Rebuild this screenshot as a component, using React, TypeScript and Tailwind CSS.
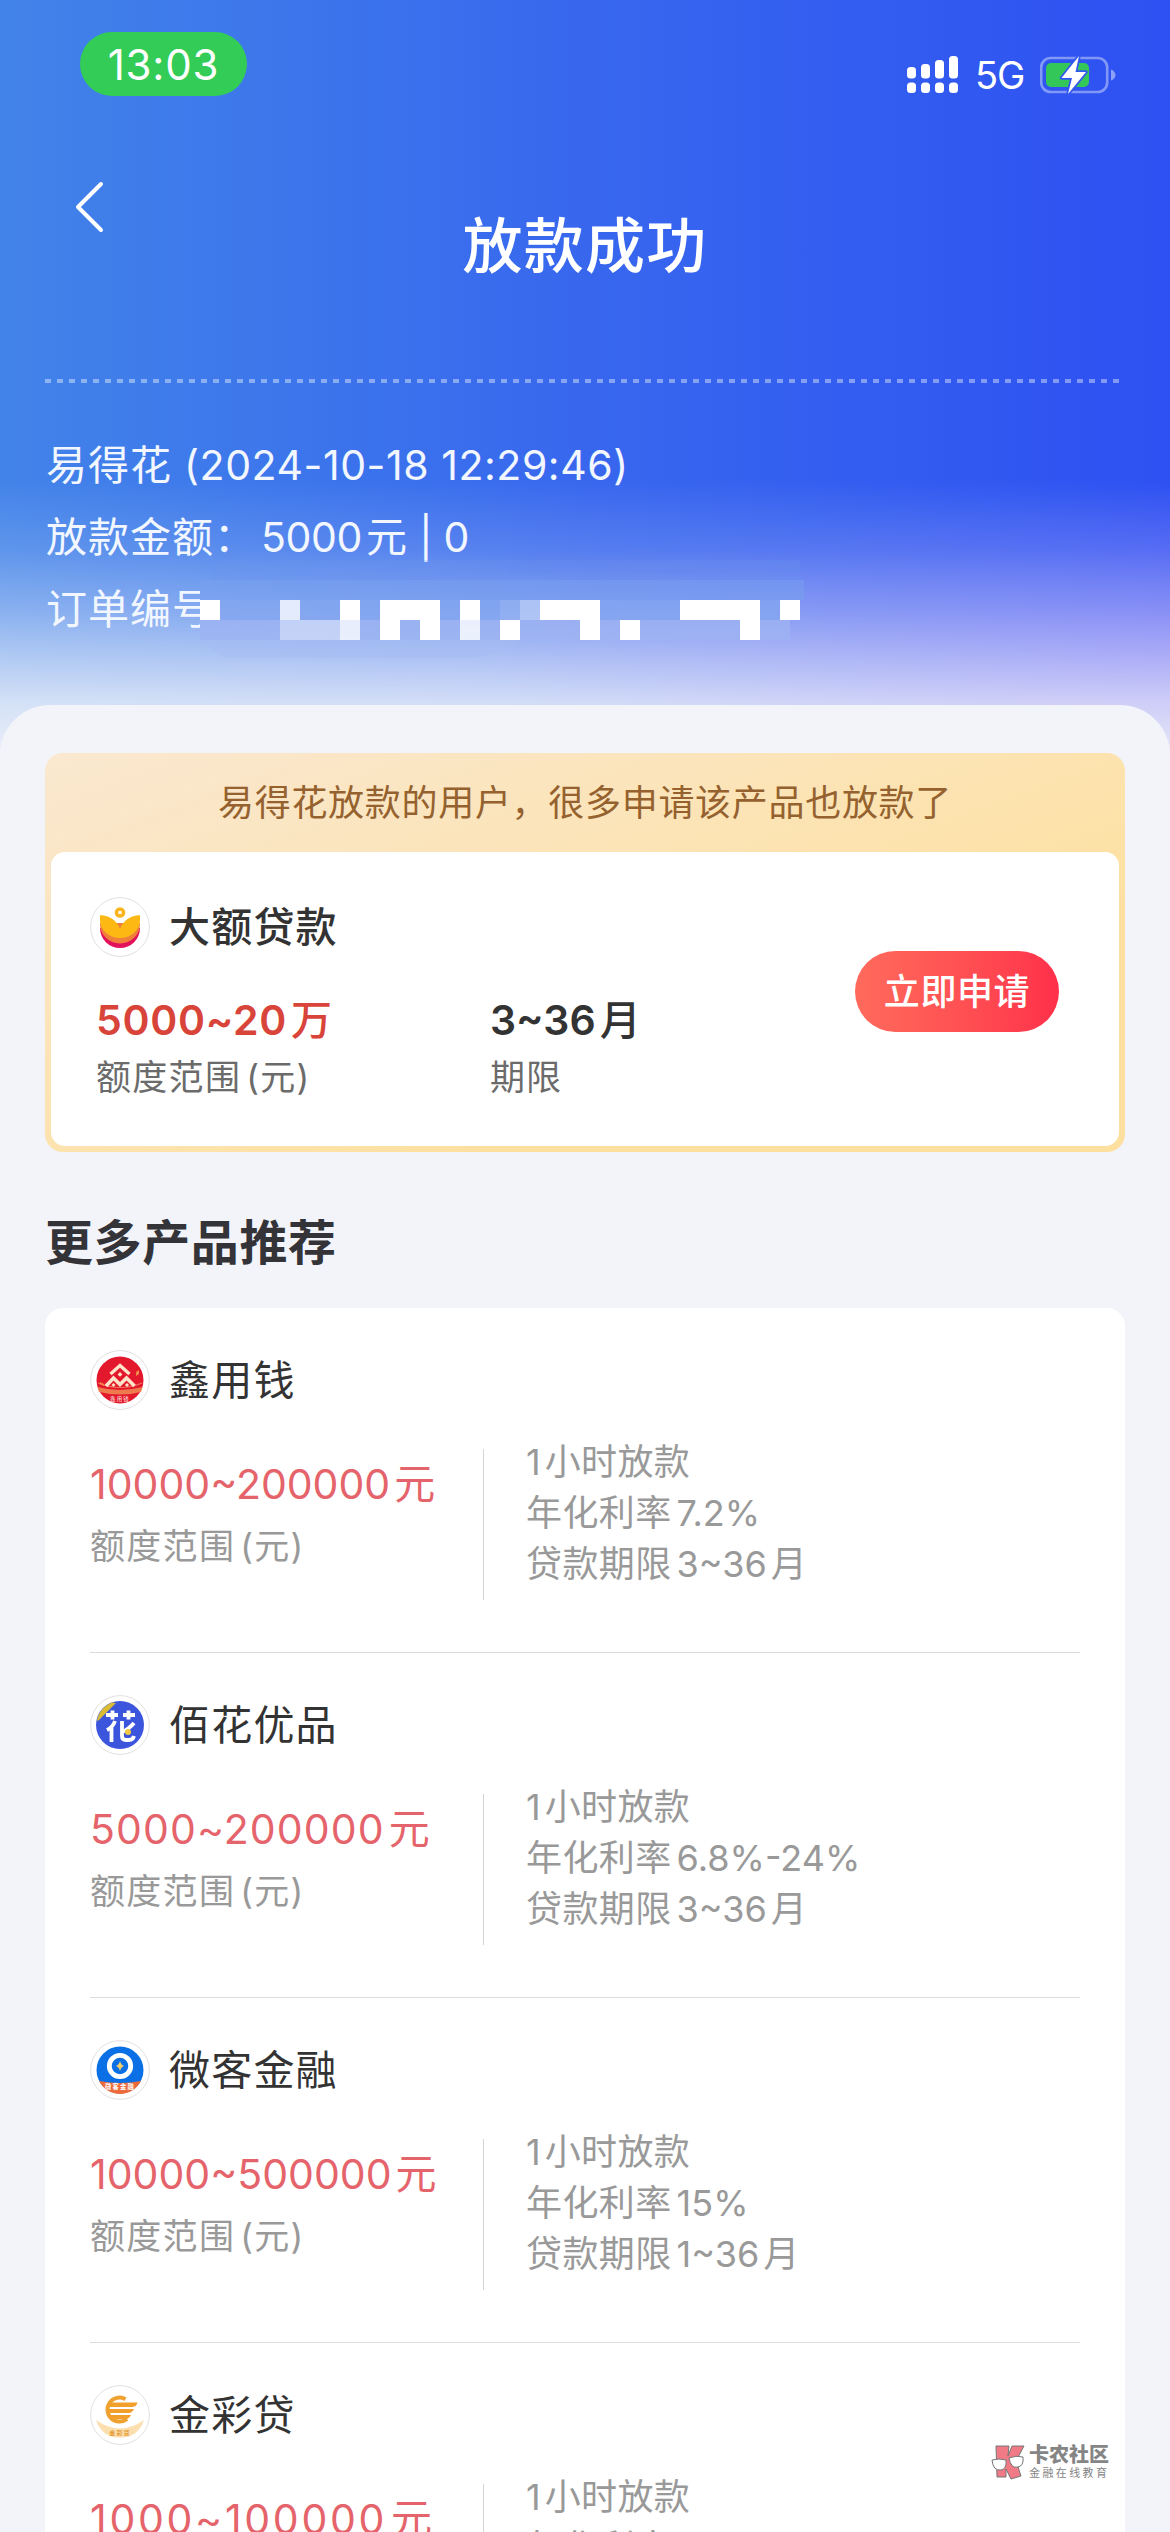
import type { ReactNode } from "react";
import clsx from "clsx";

interface Product {
  name: string;
  amount: string;
  amountTracking: string;
  details: string[];
  logo: ReactNode;
}

// 數字與英文使用 Inter，中文使用 Noto Sans CJK
function Mixed({ text, latin }: { text: string; latin?: string }) {
  const parts = text.match(/[\u2E80-\uFFEF]+|[^\u2E80-\uFFEF]+/g) || [];
  return (
    <>
      {parts.map((part, i) => {
        const isCjk = /[\u2E80-\uFFEF]/.test(part);
        const gapBefore = !isCjk && i > 0 && !/^[) ]/.test(part);
        const gapAfter = !isCjk && i < parts.length - 1 && !/[( ]$/.test(part);
        return (
          <span
            key={i}
            className={clsx("whitespace-pre", !isCjk && latin, gapBefore && "ml-[5px]", gapAfter && "mr-1")}
          >
            {part}
          </span>
        );
      })}
    </>
  );
}

function LogoFrame({ children }: { children: ReactNode }) {
  return (
    <svg viewBox="0 0 60 60" className="size-[60px] shrink-0">
      <circle cx="30" cy="30" r="29.4" fill="#fff" stroke="#dcdcdc" strokeWidth="0.9" />
      {children}
    </svg>
  );
}

const lotusLogo = (
  <LogoFrame>
    <path d="M10 31a20 20 0 0 0 40 0z" fill="#e3125c" />
    <path d="M10 26v1a20 19.500 0 0 0 40 0v-1z" fill="#f0803c" />
    <path d="M10 18q15 1 20 14q5-13 20-14v5a20 18 0 0 1-40 0z" fill="#fdb813" />
    <circle cx="30" cy="15.5" r="5.3" fill="#f9b51d" />
    <circle cx="30" cy="15.5" r="1.8" fill="#fff" />
  </LogoFrame>
);

const xinLogo = (
  <LogoFrame>
    <circle cx="30" cy="30" r="23.5" fill="#e4182c" />
    <path d="M7.500 37q22 6 45 0l-1.500 5q-20 5-42 0z" fill="#ee7a4e" />
    <path d="M8 33q22 9 44 0" fill="none" stroke="#f6b27a" strokeWidth="1.200" opacity="0.6" />
    <path d="M20.500 24l9.500-8.500l9.500 8.500" fill="none" stroke="#fde3c8" strokeWidth="3.400" />
    <path d="M16 36l7.500-8l6.500 6.500l6.500-6.500l8 8" fill="none" stroke="#fde3c8" strokeWidth="3.600" />
    <path d="M30 22l2.400 2.400l-2.400 2.400l-2.400-2.400zM23.500 33l2 2l-2 2l-2-2zM37 33l2 2l-2 2l-2-2z" fill="#fde3c8" />
    <path d="M46 22l3-2v4l-3 2zM10 32l4 2v2l-4-2z" fill="#f08a4b" />
    <text x="30" y="51" fontSize="5.500" textAnchor="middle" fill="#ffe9e0">鑫用钱</text>
  </LogoFrame>
);

const huaLogo = (
  <LogoFrame>
    <circle cx="30" cy="30" r="24" fill="#3b55dd" />
    <path d="M7 25A24 24 0 0 1 22 7.500L26 8L8 26z" fill="#d9bb35" />
    <g fill="none" stroke="#fff" strokeWidth="3.800">
      <path d="M16 20h12M33 20h12M22.500 15.500v9M38.500 15.500v9" />
      <path d="M25 26q-2 6-8 9M21.500 32v15" />
      <path d="M32 26v15q0 4 4 4h3q4 0 5-4M44 28q-5 6-12 9" />
    </g>
    <circle cx="38" cy="37" r="3" fill="#f5c842" />
  </LogoFrame>
);

const weikeLogo = (
  <LogoFrame>
    <circle cx="30" cy="30" r="23.500" fill="#0b6fe6" />
    <path d="M9 41q21 4 42 0a23.500 23.500 0 0 1-42 0z" fill="#ec6a3c" />
    <circle cx="30" cy="26" r="10.700" fill="none" stroke="#fff" strokeWidth="4.800" />
    <path d="M30 21q1 4 4 5q-3 1-4 5q-1-4-4-5q3-1 4-5z" fill="#f3cf6a" />
    <text x="30" y="49" fontSize="6.300" fontWeight="700" textAnchor="middle" fill="#fff">微客金融</text>
  </LogoFrame>
);

const jincaiLogo = (
  <LogoFrame>
    <path d="M6 35q24 17 48 0q-4 12-14 16q-10 3-20 0q-10-4-14-16z" fill="#fbdfae" />
    <path d="M35.500 14.200A12 12 0 1 0 37 34" fill="none" stroke="#efa12f" strokeWidth="4" />
    <path d="M19.500 17.500h28q-1 4-5 4.500h-23zM19 24h25q-2 4-5 4h-20zM20 30h21q-2 4-5 4h-13z" fill="#f2a02b" />
    <text x="30" y="50" fontSize="6" fontWeight="700" textAnchor="middle" fill="#e69a35">金彩贷</text>
  </LogoFrame>
);

const products: Product[] = [
  {
    name: "鑫用钱",
    amount: "10000~200000元",
    amountTracking: "tracking-normal",
    details: ["1小时放款", "年化利率7.2%", "贷款期限3~36月"],
    logo: xinLogo,
  },
  {
    name: "佰花优品",
    amount: "5000~200000元",
    amountTracking: "tracking-[1.100px]",
    details: ["1小时放款", "年化利率6.8%-24%", "贷款期限3~36月"],
    logo: huaLogo,
  },
  {
    name: "微客金融",
    amount: "10000~500000元",
    amountTracking: "tracking-normal",
    details: ["1小时放款", "年化利率15%", "贷款期限1~36月"],
    logo: weikeLogo,
  },
  {
    name: "金彩贷",
    amount: "1000~100000元",
    amountTracking: "tracking-[2.700px]",
    details: ["1小时放款", "年化利率7.2%", "贷款期限3~36月"],
    logo: jincaiLogo,
  },
];

// [欄, 列, 透明度]
const mosaic: [number, number, number][] = [
  [0, 0, 1], [4, 0, 0.78], [7, 0, 1], [9, 0, 1], [10, 0, 1], [11, 0, 1], [13, 0, 1],
  [15, 0, 0.1], [16, 0, 0.35], [17, 0, 1], [18, 0, 1], [19, 0, 1],
  [24, 0, 1], [25, 0, 1], [26, 0, 1], [27, 0, 1], [29, 0, 1],
  [4, 1, 0.4], [5, 1, 0.4], [6, 1, 0.4], [7, 1, 0.78], [9, 1, 1], [11, 1, 1],
  [13, 1, 0.8], [15, 1, 1], [19, 1, 1], [21, 1, 1], [27, 1, 1],
];

function StatusBar() {
  return (
    <div className="flex h-[96px] items-start justify-between pl-20 pr-[54px] pt-8">
      <div className="flex h-16 w-[167px] items-center justify-center rounded-full bg-[#33cc57] text-[42px] tracking-[0.800px]">
        13:03
      </div>
      <div className="flex h-[86px] items-center">
        <svg viewBox="0 0 52 38" className="h-[38px] w-[52px]" fill="#fff">
          <rect x="0" y="11" width="9" height="11.500" rx="3.500" />
          <rect x="14" y="8" width="9" height="14.500" rx="3.500" />
          <rect x="28" y="4" width="9" height="18.500" rx="3.500" />
          <rect x="42" y="0" width="9" height="22.500" rx="3.500" />
          <rect x="0" y="26.500" width="9" height="10.500" rx="3.500" />
          <rect x="14" y="26.500" width="9" height="10.500" rx="3.500" />
          <rect x="28" y="26.500" width="9" height="10.500" rx="3.500" />
          <rect x="42" y="26.500" width="9" height="10.500" rx="3.500" />
        </svg>
        <span className="ml-4 w-[65px] text-[38px] leading-[38px] tracking-[-1px]">5G</span>
        <svg viewBox="0 0 76 40" className="h-10 w-[76px]">
          <rect x="1.200" y="3" width="66" height="34" rx="9.500" fill="none" stroke="#fff" strokeOpacity="0.4" strokeWidth="2.600" />
          <path d="M71 14.500q4.500 2 4.500 5.500t-4.500 5.500z" fill="#fff" fillOpacity="0.45" />
          <rect x="6" y="8" width="43" height="24" rx="5" fill="#33c759" />
          <path d="M39 1L21.500 23h10.500L28 39L46 17H35.500z" fill="#fff" stroke="#3358ef" strokeWidth="3.500" strokeLinejoin="round" paintOrder="stroke" />
        </svg>
      </div>
    </div>
  );
}

function OrderInfo() {
  return (
    <div className="pl-[46px] pt-[46px] text-[41px] leading-[72px] tracking-[1px] text-[#f2f7ff]">
      <div className="flex h-[72px]">
        <Mixed text="易得花 (2024-10-18 12:29:46)" latin="tracking-[0.550px]" />
      </div>
      <div className="flex h-[72px]">
        <Mixed text="放款金额：5000元 | 0" latin="tracking-[-0.4px]" />
      </div>
      <div className="flex h-[72px]">
        <div className="w-[154px] shrink-0 overflow-hidden whitespace-nowrap">订单编号</div>
        <svg viewBox="0 0 610 110" className="-mt-5 h-[110px] w-[610px]">
          <path d="M320 0H580q15 0 20 20H308z" fill="#5c82ea" opacity="0.15" />
          <path d="M20 7H600V27H10z" fill="#6a93ec" opacity="0.25" />
          <rect x="0" y="27" width="604" height="20" fill="#789fee" opacity="0.5" />
          <rect x="0" y="47" width="600" height="20" fill="#83a5ef" opacity="0.75" />
          <rect x="0" y="67" width="590" height="20" fill="#9db3f1" opacity="0.75" />
          <path d="M8 87H320q-20 16-60 18H26q-12-4-18-18z" fill="#a5bbf2" opacity="0.5" />
          {mosaic.map(([col, row, opacity]) => (
            <rect key={`${col}-${row}`} x={col * 20} y={47 + row * 20} width="20" height="20" fill="#fff" opacity={opacity} />
          ))}
        </svg>
      </div>
    </div>
  );
}

function FeaturedCard() {
  return (
    <div className="h-[399px] rounded-[18px] bg-linear-to-br from-[#fae8d0] to-[#fde0a0] to-70% px-1.5 pb-1.5">
      <div className="flex h-[99px] items-center justify-center text-[36px] tracking-[0.700px] text-[#95622f]">
        易得花放款的用户，很多申请该产品也放款了
      </div>
      <div className="flex h-[294px] justify-between rounded-[14px] bg-white pl-[39px] pr-[60px] pt-[45px]">
        <div>
          <div className="flex items-center gap-[19px] text-[41px] font-medium leading-[60px] tracking-[1.200px] text-[#333]">
            {lotusLogo}
            <span>大额贷款</span>
          </div>
          <div className="flex pl-1.5 pt-[34px]">
            <div className="w-[394px]">
              <div className="flex h-[60px] items-center text-[41px] font-medium text-[#d9443a]">
                <Mixed text="5000~20万" latin="font-semibold tracking-[0.700px]" />
              </div>
              <div className="flex h-[52px] items-center text-[35px] tracking-[1.300px] text-[#6b6b6b]">
                <Mixed text="额度范围(元)" />
              </div>
            </div>
            <div>
              <div className="flex h-[60px] items-center text-[41px] font-medium text-[#333]">
                <Mixed text="3~36月" latin="font-semibold tracking-[0px]" />
              </div>
              <div className="flex h-[52px] items-center text-[35px] tracking-[1px] text-[#6b6b6b]">期限</div>
            </div>
          </div>
        </div>
        <button
          type="button"
          className="mt-[54px] h-[81px] w-[204px] rounded-full bg-linear-to-r from-[#ff6a5c] to-[#ff2f4a] text-[36px] font-medium tracking-[0.600px] text-white"
        >
          立即申请
        </button>
      </div>
    </div>
  );
}

function ProductItem({ product }: { product: Product }) {
  return (
    <div className="h-[345px] border-b border-[#dcdcdc] pt-[42px]">
      <div className="flex items-center gap-[19px] text-[41px] leading-[60px] tracking-[1.200px] text-[#333]">
        {product.logo}
        <span>{product.name}</span>
      </div>
      <div className="mt-[39px] flex h-[151px]">
        <div className="w-[394px] shrink-0 border-r border-[#d4d4d4]">
          <div className="flex h-[72px] items-center text-[41px] text-[#e5636a]">
            <Mixed text={product.amount} latin={product.amountTracking} />
          </div>
          <div className="flex h-[51px] items-center text-[35px] tracking-[1.300px] text-[#999]">
            <Mixed text="额度范围(元)" />
          </div>
        </div>
        <div className="-mt-3 pl-[42px] text-[36px] leading-[51px] tracking-[0.400px] text-[#999]">
          {product.details.map((detail) => (
            <div key={detail} className="flex h-[51px]">
              <Mixed text={detail} latin="tracking-normal" />
            </div>
          ))}
        </div>
      </div>
    </div>
  );
}

function Watermark() {
  return (
    <div className="absolute left-[991px] top-[2444px] flex items-center gap-1">
      <svg viewBox="0 0 34 36" className="h-9 w-[34px]">
        <path d="M5 2h13l-1 10l4-10h12l-8 15l5 15l-10 3l-5-10v8H6z" fill="#f07a86" stroke="#777" strokeWidth="1" />
        <path d="M1 16q7-2 14 0q1 9-5 10q-8 1-9-10zM18 14q7-3 14-1q1 9-5 10q-7 2-9-9z" fill="#fff" stroke="#777" strokeWidth="1" />
      </svg>
      <div className="text-[#858585]">
        <div className="text-[20px] font-black leading-[22px]">卡农社区</div>
        <div className="text-[11px] leading-[14px] tracking-[2.400px]">金融在线教育</div>
      </div>
    </div>
  );
}

export default function App() {
  return (
    <div className="relative h-[2532px] w-[1170px] overflow-hidden bg-linear-to-r from-[#4283e9] via-[#3867ee] to-[#2e50f2] font-['Inter','Noto_Sans_CJK_SC',sans-serif]">
      <div className="bg-[radial-gradient(ellipse_700px_150px_at_1170px_640px,rgba(190,130,250,0.2),transparent),linear-gradient(to_bottom,transparent_480px,rgba(242,244,249,0.16)_550px,rgba(242,244,249,0.4)_610px,rgba(242,244,249,0.64)_660px,rgba(242,244,249,0.82)_700px,#f2f4f9_770px)]">
        <header className="h-[705px] text-white">
          <StatusBar />
          <div className="flex h-[283px] px-[75px] pt-[84px]">
            <svg viewBox="0 0 30 54" className="h-[54px] w-[30px]" fill="none" stroke="#fff" strokeWidth="4" strokeLinecap="round" strokeLinejoin="round">
              <path d="M26 4L3 27l23 23" />
            </svg>
            <h1 className="flex-1 pr-[30px] pt-[21px] text-center text-[60px] font-medium leading-[90px] tracking-[1.200px]">放款成功</h1>
          </div>
          <div className="mx-[45px] h-1 bg-[repeating-linear-gradient(to_right,rgba(255,255,255,0.4)_0px,rgba(255,255,255,0.4)_6px,transparent_6px,transparent_12px)]" />
          <OrderInfo />
        </header>
        <main className="rounded-t-[50px] bg-[#f2f4f9] px-[45px] pt-12">
          <FeaturedCard />
          <h2 className="flex h-[156px] items-center pt-[26px] text-[48px] font-bold tracking-[0.600px] text-[#333338]">更多产品推荐</h2>
          <section className="rounded-[18px] bg-white px-[45px]">
            {products.map((product) => (
              <ProductItem key={product.name} product={product} />
            ))}
          </section>
        </main>
      </div>
      <Watermark />
    </div>
  );
}
